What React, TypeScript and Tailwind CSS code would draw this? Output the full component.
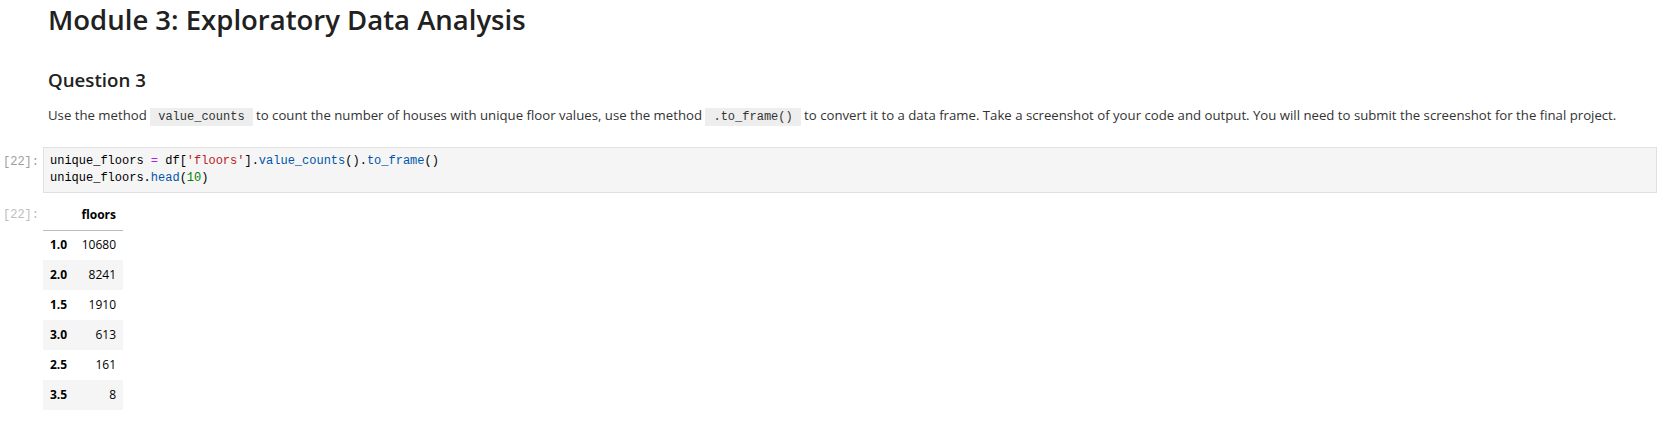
const rows: [string, string][] = [
  ["1.0", "10680"],
  ["2.0", "8241"],
  ["1.5", "1910"],
  ["3.0", "613"],
  ["2.5", "161"],
  ["3.5", "8"],
];

function InlineCode({ children }: { children: React.ReactNode }) {
  return (
    <code className="bg-[#eeeeee] px-[8px] py-[2px] font-['Liberation_Mono',monospace] text-[12px] text-[#333]">
      {children}
    </code>
  );
}

export default function App() {
  return (
    <div className="w-[1657px] h-[423px] overflow-hidden bg-white text-[#212121] font-['Open_Sans',sans-serif]">
      {/* markdown cell */}
      <div className="pl-[48px]">
        <h1 className="text-[27.5px] leading-[39px] font-semibold">
          Module 3: Exploratory Data Analysis
        </h1>
        <h2 className="mt-[29px] text-[18.7px] leading-[24px] font-semibold">
          Question 3
        </h2>
        <p className="mt-[13px] text-[13.2px] leading-[20px] text-[#333]">
          Use the method <InlineCode>value_counts</InlineCode> to count the
          number of houses with unique floor values, use the method{" "}
          <InlineCode>.to_frame()</InlineCode> to convert it to a data frame.
          Take a screenshot of your code and output. You will need to submit
          the screenshot for the final project.
        </p>
      </div>

      {/* code cell */}
      <div className="mt-[20px] flex">
        <div className="w-[43px] pl-[3px] pt-[7px] font-['Liberation_Mono',monospace] text-[12px] leading-[17px] text-[#9e9e9e]">
          [22]:
        </div>
        <div className="flex-1 h-[46px] border border-[#e0e0e0] bg-[#f5f5f5] px-[6px] pt-[5px] font-['Liberation_Mono',monospace] text-[12px] leading-[17px] whitespace-pre">
          <div>
            <span className="text-black">unique_floors </span>
            <span className="text-[#aa22ff]">=</span>
            <span className="text-black"> df[</span>
            <span className="text-[#ba2121]">'floors'</span>
            <span className="text-black">].</span>
            <span className="text-[#0055aa]">value_counts</span>
            <span className="text-black">().</span>
            <span className="text-[#0055aa]">to_frame</span>
            <span className="text-black">()</span>
          </div>
          <div>
            <span className="text-black">unique_floors.</span>
            <span className="text-[#0055aa]">head</span>
            <span className="text-black">(</span>
            <span className="text-[#008000]">10</span>
            <span className="text-black">)</span>
          </div>
        </div>
      </div>

      {/* output */}
      <div className="mt-[7px] flex">
        <div className="w-[43px] pl-[3px] pt-[7px] font-['Liberation_Mono',monospace] text-[12px] leading-[17px] text-[#bdbdbd]">
          [22]:
        </div>
        <table className="border-collapse text-[12px] text-black">
          <thead>
            <tr className="h-[30px] border-b border-[#bdbdbd]">
              <th className="w-[30px]"></th>
              <th className="w-[50px] pr-[7px] text-right font-bold">floors</th>
            </tr>
          </thead>
          <tbody>
            {rows.map(([idx, val], i) => (
              <tr
                key={idx}
                className={i % 2 === 1 ? "h-[30px] bg-[#f5f5f5]" : "h-[30px]"}
              >
                <th className="pl-[7px] text-left font-bold">{idx}</th>
                <td className="pr-[7px] text-right">{val}</td>
              </tr>
            ))}
          </tbody>
        </table>
      </div>
    </div>
  );
}
